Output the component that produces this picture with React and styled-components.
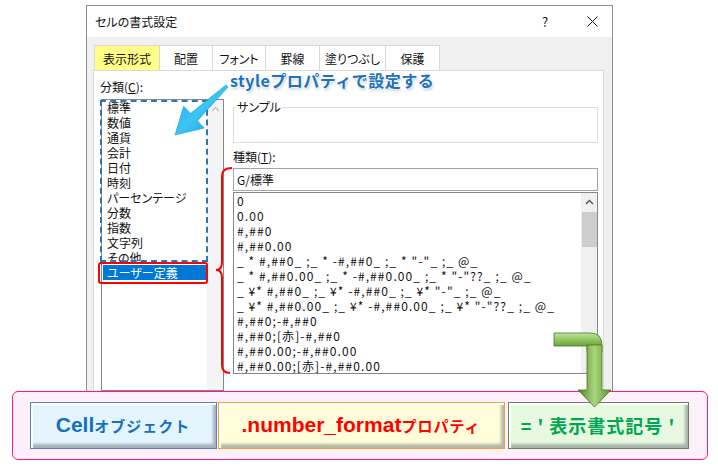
import React from "react";
import styled, { createGlobalStyle } from "styled-components";

const UI = `"Noto Sans CJK JP", "Noto Sans", sans-serif`;

const Global = createGlobalStyle`
  html, body { margin: 0; padding: 0; background: #fff; }
  body { font-family: ${UI}; }
`;

const Stage = styled.div`
  position: relative;
  width: 718px;
  height: 466px;
  overflow: hidden;
  padding-top: 5px;
  box-sizing: border-box;
`;

const Dialog = styled.div`
  margin-left: 86px;
  width: 527px;
  height: 386px;
  box-sizing: border-box;
  border: 1px solid #8f8f8f;
  border-bottom: none;
  background: #f0f0f0;
  display: flex;
  flex-direction: column;
  font-family: ${UI};
  font-size: 12px;
  font-feature-settings: "palt";
  color: #111;
`;

const TitleBar = styled.div`
  flex: none;
  height: 31px;
  background: #fff;
  display: flex;
  align-items: center;
  padding: 0 5px 0 8px;
`;

const Title = styled.div`
  flex: 1;
  font-size: 12px;
`;

const TitleBtn = styled.div`
  width: 30px;
  display: flex;
  justify-content: center;
  align-items: center;
  font-size: 13px;
  margin-right: ${(p) => p.$mr || 0}px;
`;

const Tabs = styled.div`
  flex: none;
  display: flex;
  margin: 8px 0 0 7px;
  height: 25px;
`;

const Tab = styled.div`
  width: ${(p) => p.$w}px;
  box-sizing: border-box;
  border: 1px solid #d9d9d9;
  border-bottom: none;
  margin-left: -1px;
  background: ${(p) => (p.$active ? "#ffff88" : "#fff")};
  display: flex;
  align-items: center;
  justify-content: center;
  font-size: 12px;
  &:first-child { margin-left: 0; }
`;

const Panel = styled.div`
  flex: 1;
  margin-left: 6px;
  width: 511px;
  box-sizing: border-box;
  border: 1px solid #d9d9d9;
  border-bottom: none;
  background: #fff;
  display: flex;
  min-height: 0;
`;

const LeftCol = styled.div`
  display: flex;
  flex-direction: column;
  margin-left: 7px;
  padding-top: 8px;
  width: 123px;
`;

const FieldLabel = styled.div`
  line-height: 16px;
  height: 16px;
  margin-left: ${(p) => p.$ml || 0}px;
  margin-top: ${(p) => p.$mt || 0}px;
  u { text-decoration: underline; text-underline-offset: 1px; }
`;

const ListBox = styled.div`
  margin-top: ${(p) => p.$mt || 0}px;
  height: ${(p) => (p.$h ? `${p.$h}px` : "auto")};
  flex: ${(p) => (p.$h ? "none" : 1)};
  box-sizing: border-box;
  border: 1px solid #828790;
  background: #fff;
  display: flex;
  overflow: hidden;
`;

const Items = styled.div`
  flex: 1;
  padding: 0 1px;
  min-width: 0;
`;

const Item = styled.div`
  height: 15px;
  line-height: 15px;
  padding-left: ${(p) => p.$pl}px;
  white-space: pre;
  font-size: 12px;
  letter-spacing: ${(p) => p.$ls || 0}px;
  background: ${(p) => (p.$sel ? "#0078d7" : "transparent")};
  color: ${(p) => (p.$sel ? "#fff" : "#111")};
`;

const ScrollBar = styled.div`
  width: 16px;
  flex: none;
  background: ${(p) => p.$bg};
  display: flex;
  flex-direction: column;
  align-items: center;
`;

const ArrowCell = styled.div`
  height: 17px;
  width: 100%;
  display: flex;
  align-items: center;
  justify-content: center;
`;

const Thumb = styled.div`
  margin-top: 2px;
  width: 15px;
  height: 35px;
  background: #cdcdcd;
`;

const RightCol = styled.div`
  margin-left: 9px;
  width: 365px;
  padding-top: 28px;
  display: flex;
  flex-direction: column;
`;

const Group = styled.fieldset`
  margin: 0;
  padding: 0;
  height: 44px;
  box-sizing: border-box;
  border: 1px solid #dcdcdc;
  legend {
    margin-left: 2px;
    padding: 0 1px;
    font-size: 12px;
    line-height: 16px;
  }
`;

const TextInput = styled.div`
  margin-top: 3px;
  height: 23px;
  box-sizing: border-box;
  border: 1px solid #a6a6a6;
  padding-left: 3px;
  display: flex;
  align-items: center;
  font-size: 12px;
`;

const Summary = styled.div`
  margin-left: 12px;
  width: 696px;
  height: 69px;
  box-sizing: border-box;
  border: 1.5px solid #ff1a7a;
  border-radius: 6px;
  background: #fdf0fb;
  display: flex;
  padding: 9.5px 0 0 16.5px;
`;

const Btn = styled.div`
  width: ${(p) => p.$w}px;
  height: 47px;
  box-sizing: border-box;
  margin-right: ${(p) => p.$mr || 0}px;
  border: 1px solid ${(p) => p.$border};
  background: ${(p) => p.$bg};
  box-shadow: inset 2px 2px 1px rgba(255, 255, 255, 0.95),
    inset -3px -4px 3px rgba(60, 70, 80, 0.38);
  display: flex;
  align-items: center;
  justify-content: center;
  color: ${(p) => p.$color};
  font-weight: 700;
  font-family: ${UI};
  white-space: pre;
`;

const Big = styled.span`
  font-family: "Liberation Sans", Arial, sans-serif;
  font-weight: 700;
  font-size: 21px;
`;

const Small = styled.span`
  font-family: ${UI};
  font-weight: 700;
  font-size: 15px;
  letter-spacing: 1px;
`;

const Formula = styled.span`
  font-family: ${UI};
  font-weight: 700;
  font-size: 18px;
  letter-spacing: 1px;
`;

/* ---------- annotations (overlaid) ---------- */
const Overlay = styled.div`
  position: absolute;
  left: ${(p) => p.$x}px;
  top: ${(p) => p.$y}px;
  width: ${(p) => p.$w}px;
  height: ${(p) => p.$h}px;
  pointer-events: none;
`;

const DashedBox = styled(Overlay)`
  box-sizing: border-box;
  border: 2px dashed #2e75b6;
`;

const RedBox = styled(Overlay)`
  box-sizing: border-box;
  border: 2px solid #ff0000;
  border-radius: 3px;
`;

const StyleNote = styled.div`
  position: absolute;
  left: 230px;
  top: 70px;
  font-family: ${UI};
  font-weight: 700;
  font-size: 16px;
  line-height: 20px;
  letter-spacing: 0.5px;
  color: #1b72bf;
  white-space: nowrap;
  text-shadow: 0 0 2px #fff, 0 0 3px #fff, 1px 2px 3px rgba(0, 0, 0, 0.25);
`;

const Chevron = ({ color }) => (
  <svg width="9" height="6" viewBox="0 0 9 6">
    <path d="M1 5 L4.5 1.5 L8 5" fill="none" stroke={color} strokeWidth="1.3" />
  </svg>
);

const categories = [
  "標準", "数値", "通貨", "会計", "日付", "時刻", "パーセンテージ",
  "分数", "指数", "文字列", "その他", "ユーザー定義",
];

const formats = [
  "0",
  "0.00",
  "#,##0",
  "#,##0.00",
  '_ * #,##0_ ;_ * -#,##0_ ;_ * "-"_ ;_ @_',
  '_ * #,##0.00_ ;_ * -#,##0.00_ ;_ * "-"??_ ;_ @_',
  '_ ¥* #,##0_ ;_ ¥* -#,##0_ ;_ ¥* "-"_ ;_ @_',
  '_ ¥* #,##0.00_ ;_ ¥* -#,##0.00_ ;_ ¥* "-"??_ ;_ @_',
  "#,##0;-#,##0",
  "#,##0;[赤]-#,##0",
  "#,##0.00;-#,##0.00",
  "#,##0.00;[赤]-#,##0.00",
];

const tabs = [
  ["表示形式", 66],
  ["配置", 54],
  ["フォント", 54],
  ["罫線", 55],
  ["塗りつぶし", 67],
  ["保護", 55],
];

export default function App() {
  return (
    <>
      <Global />
      <Stage>
        <Dialog>
          <TitleBar>
            <Title>セルの書式設定</Title>
            <TitleBtn $mr={17}>?</TitleBtn>
            <TitleBtn>
              <svg width="11" height="11" viewBox="0 0 11 11">
                <path d="M0.5 0.5 L10.5 10.5 M10.5 0.5 L0.5 10.5" stroke="#111" strokeWidth="1" />
              </svg>
            </TitleBtn>
          </TitleBar>
          <Tabs>
            {tabs.map(([t, w], i) => (
              <Tab key={t} $w={w} $active={i === 0}>
                {t}
              </Tab>
            ))}
          </Tabs>
          <Panel>
            <LeftCol>
              <FieldLabel $ml={-1}>
                分類(<u>C</u>):
              </FieldLabel>
              <ListBox $mt={4}>
                <Items>
                  {categories.map((c, i) => (
                    <Item key={c} $pl={4} $sel={i === categories.length - 1}>
                      {c}
                    </Item>
                  ))}
                </Items>
                <ScrollBar $bg="#f4f4f4">
                  <ArrowCell>
                    <Chevron color="#c2c2c2" />
                  </ArrowCell>
                </ScrollBar>
              </ListBox>
            </LeftCol>
            <RightCol>
              <Group>
                <legend>サンプル</legend>
              </Group>
              <FieldLabel $mt={6}>
                種類(<u>T</u>):
              </FieldLabel>
              <TextInput>G/標準</TextInput>
              <ListBox $mt={1} $h={182}>
                <Items>
                  {formats.map((f) => (
                    <Item key={f} $pl={2} $ls={1.1}>
                      {f}
                    </Item>
                  ))}
                </Items>
                <ScrollBar $bg="#f0f0f0">
                  <ArrowCell>
                    <Chevron color="#505050" />
                  </ArrowCell>
                  <Thumb />
                </ScrollBar>
              </ListBox>
            </RightCol>
          </Panel>
        </Dialog>

        <Summary>
          <Btn $w={187} $mr={1} $border="#5b84b1" $bg="#e4f4fd" $color="#1570c0">
            <Big>Cell</Big>
            <Small>オブジェクト</Small>
          </Btn>
          <Btn $w={287} $mr={3} $border="#e3a93b" $bg="#fffdd9" $color="#ff0000">
            <Big>.number_format</Big>
            <Small>プロパティ</Small>
          </Btn>
          <Btn $w={181} $border="#6a8060" $bg="#e6f8e0" $color="#00a651">
            <Formula>= ' 表示書式記号 '</Formula>
          </Btn>
        </Summary>

        {/* annotations */}
        <DashedBox $x={100} $y={100} $w={108} $h={162} />
        <RedBox $x={98} $y={262} $w={110} $h={22} />

        <Overlay $x={212} $y={164} $w={24} $h={214}>
          <svg width="24" height="214" viewBox="0 0 24 214">
            <path
              d="M20 4 Q10 4 10 12 L10 98 Q10 106 4 106 Q10 106 10 114 L10 201 Q10 209 18 209"
              fill="none"
              stroke="#ff0000"
              strokeWidth="2"
            />
          </svg>
        </Overlay>

        <Overlay $x={170} $y={80} $w={62} $h={60}>
          <svg width="62" height="60" viewBox="0 0 62 60" style={{ overflow: "visible" }}>
            <defs>
              <linearGradient id="ba" x1="0" y1="0" x2="1" y2="1">
                <stop offset="0" stopColor="#18a8e6" />
                <stop offset="0.5" stopColor="#3cc4f4" />
                <stop offset="1" stopColor="#0e9ad8" />
              </linearGradient>
            </defs>
            <polygon
              points="5,55 34.2,48.1 27.4,40.8 58,7.1 56,4.9 20.5,33.5 13.7,26.2"
              fill="url(#ba)"
              stroke="#1597d2"
              strokeWidth="0.6"
            />
          </svg>
        </Overlay>

        <StyleNote>styleプロパティで設定する</StyleNote>

        <Overlay $x={550} $y={328} $w={66} $h={84}>
          <svg width="66" height="84" viewBox="0 0 66 84">
            <defs>
              <linearGradient id="gh" x1="0" y1="0" x2="0" y2="1">
                <stop offset="0" stopColor="#c0e69a" />
                <stop offset="0.45" stopColor="#86bd52" />
                <stop offset="1" stopColor="#4b7b22" />
              </linearGradient>
              <linearGradient id="gv" x1="0" y1="0" x2="1" y2="0">
                <stop offset="0" stopColor="#4f8026" />
                <stop offset="0.5" stopColor="#a9d77c" />
                <stop offset="1" stopColor="#5e9232" />
              </linearGradient>
            </defs>
            <path d="M4 5 L40 5 Q52 5 52 17 L52 24 L37 24 L37 18 L4 18 Z" fill="url(#gh)" stroke="#4a7526" strokeWidth="0.8" />
            <path d="M37 17 L52 17 L52 62 L61 62 L44.5 79 L28 62 L37 62 Z" fill="url(#gv)" stroke="#4a7526" strokeWidth="0.8" />
          </svg>
        </Overlay>
      </Stage>
    </>
  );
}
